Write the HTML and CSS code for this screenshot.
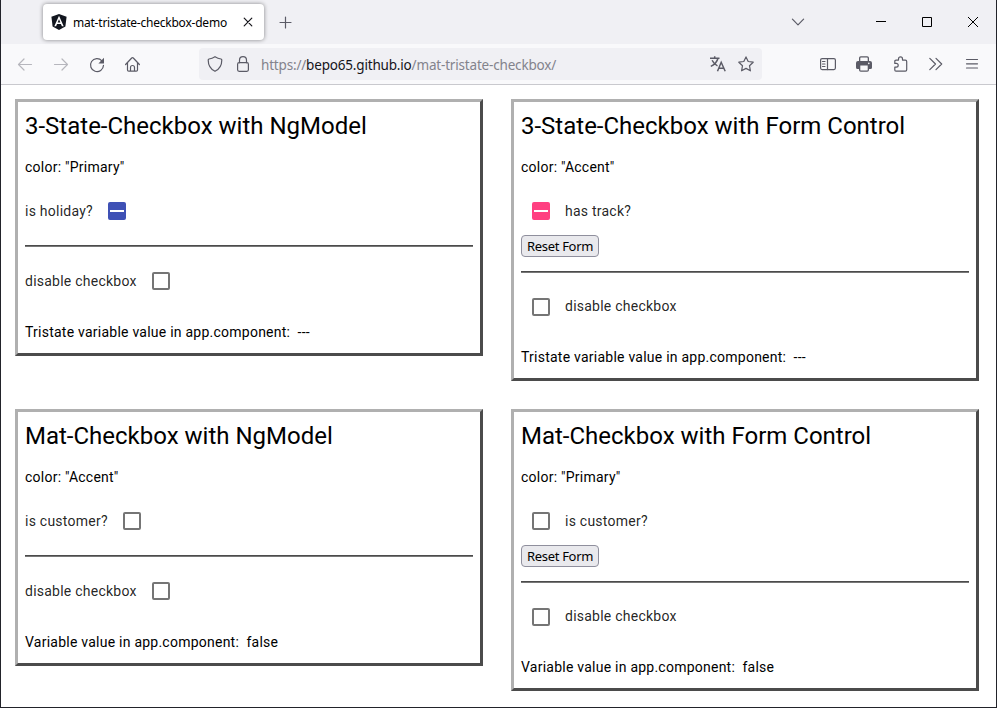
FILE: index.html
```html
<!DOCTYPE html>
<html lang="en">
<head>
<meta charset="utf-8">
<title>mat-tristate-checkbox-demo</title>
<link rel="stylesheet" href="styles.css">
</head>
<body>
<div class="window">
  <header class="tabs">
    <div class="tab">
      <svg class="icon" viewBox="0 0 16 16"><path fill="#12161f" d="M8 0l7.600 2.700-1.200 9.800L8 16l-6.400-3.500L.4 2.700z"/><path fill="#fff" fill-rule="evenodd" d="M8 1.800L3.300 12.300h1.800l.95-2.400h3.900l.95 2.400h1.800zM8 5.200l1.350 3.200h-2.700z"/></svg>
      <span class="tab-title">mat-tristate-checkbox-demo</span>
      <svg class="icon tab-close" viewBox="0 0 16 16"><path class="line" d="M4.200 4.200l7.600 7.600M11.800 4.200l-7.600 7.600"/></svg>
    </div>
    <svg class="icon new-tab" viewBox="0 0 16 16"><path class="line" d="M7.500 2v11M2 7.500h11"/></svg>
    <div class="controls">
      <svg class="icon list-tabs" viewBox="0 0 16 16"><path class="line" d="M2.400 5.200L8 10.800l5.600-5.600"/></svg>
      <svg class="icon win" viewBox="0 0 16 16"><path d="M3 7.500h10"/></svg>
      <svg class="icon win" viewBox="0 0 16 16"><path d="M3.500 3.500h9v9h-9z"/></svg>
      <svg class="icon win" viewBox="0 0 16 16"><path d="M3 3l10 10M13 3L3 13"/></svg>
    </div>
  </header>
  <nav class="toolbar">
    <svg class="icon off" viewBox="0 0 16 16"><path class="line" d="M14.500 8.500h-13M7 3L1.500 8.500 7 14"/></svg>
    <svg class="icon off" viewBox="0 0 16 16"><path class="line" d="M1.500 8.500h13M9 3L14.500 8.500 9 14"/></svg>
    <svg class="icon" viewBox="0 0 16 16"><path class="line" d="M12.900 4.800A6.500 6.500 0 1 0 14.500 9.300"/><path fill="#5b5b66" d="M15 1.800v5.100a.5.500 0 0 1-.5.500H9.400z"/></svg>
    <svg class="icon" viewBox="0 0 16 16"><path class="line" d="M.6 8.500L6.700 2q.8-.7 1.600 0l6.100 6.500M2.500 7v7q0 1.200 1.200 1.200h7.600q1.200 0 1.200-1.200V7M5.500 15v-3.500a2 2 0 0 1 4 0V15"/></svg>
    <div class="urlbar">
      <svg class="icon" viewBox="0 0 16 16"><path class="line" d="M8 .7c2 1.300 3.800 2 6 2.300q.8.100.8.900C14.800 9 12.500 13 8 15.300 3.500 13 1.200 9 1.200 3.900q0-.8.8-.9C4.200 2.700 6 2 8 .7z"/></svg>
      <svg class="icon" viewBox="0 0 16 16"><path class="line" d="M4.500 6.700V4.200a3.500 3.500 0 0 1 7 0v2.500"/><rect class="line" x="2.600" y="6.700" width="10.800" height="8.600" rx="1.500"/></svg>
      <span class="url">https://<b>bepo65.github.io</b>/mat-tristate-checkbox/</span>
      <svg class="icon" viewBox="0 0 16 16"><path class="bold" d="M0 2.300h9.500M4.700.3v2M7.900 2.500C7 6 4.500 8.600.8 10.400M2.100 4.300c1.200 2.600 3 4.500 5.400 5.600M7.500 15.300l3.700-9 4 9M8.800 12.200h5.100"/></svg>
      <svg class="icon" viewBox="0 0 16 16"><path class="line" d="M8 .9l2.200 4.600 5 .7-3.700 3.500.9 5.100L8 12.400l-4.400 2.400.9-5.100L.8 6.200l5-.7z"/></svg>
    </div>
    <svg class="icon" viewBox="0 0 16 16"><rect class="line" x=".6" y="2.600" width="14.800" height="11" rx="1.500"/><path class="line" d="M7.500 2.600v11M2.500 5.500h2.500M2.500 8h2.500M2.500 10.500h2.500"/></svg>
    <svg class="icon" viewBox="0 0 16 16"><path fill="#5b5b66" fill-rule="evenodd" d="M3 5V2a1.800 1.800 0 0 1 1.800-1.800h6.400A1.800 1.800 0 0 1 13 2v3h1a2 2 0 0 1 2 2v4.500a1.500 1.500 0 0 1-1.500 1.500H13v1a1.800 1.800 0 0 1-1.800 1.800H4.800A1.800 1.800 0 0 1 3 14v-1H1.500A1.500 1.500 0 0 1 0 11.500V7a2 2 0 0 1 2-2zM4.300 5h7.400V2q0-.6-.6-.6H4.900q-.6 0-.6.600zM4.300 9.500V14q0 .6.6.600h6.200q.6 0 .6-.6V9.500z"/><circle cx="12.800" cy="7.400" r=".8" fill="#f9f9fb"/></svg>
    <svg class="icon" viewBox="0 0 16 16"><path class="line" d="M6.500 4.100V2.900a2 2 0 0 1 4 0v1.200h2.900q1.300 0 1.300 1.300v8.400q0 1.300-1.300 1.300H4q-1.200 0-1.200-1.200v-2.700h1.500a1.900 1.900 0 0 0 0-3.800H2.800V5.300q0-1.200 1.200-1.200z"/></svg>
    <svg class="icon" viewBox="0 0 16 16"><path class="line" d="M1.800 2.300L7.500 8l-5.700 5.700M8 2.300L13.700 8 8 13.700"/></svg>
    <svg class="icon" viewBox="0 0 16 16"><path class="line" d="M2.500 3.500h11M2.500 7.800h11M2.500 12h11"/></svg>
  </nav>
  <main class="page">
    <section class="card">
      <h1>3-State-Checkbox with NgModel</h1>
      <p>color: "Primary"</p>
      <label class="field"><span>is holiday?</span><i class="box primary"></i></label>
      <hr>
      <label class="field"><span>disable checkbox</span><i class="box"></i></label>
      <p class="value">Tristate variable value in app.component:&nbsp; ---</p>
    </section>
    <section class="card form">
      <h1>3-State-Checkbox with Form Control</h1>
      <p>color: "Accent"</p>
      <label class="field"><i class="box accent"></i><span>has track?</span></label>
      <button>Reset Form</button>
      <hr>
      <label class="field lower"><i class="box"></i><span>disable checkbox</span></label>
      <p class="value">Tristate variable value in app.component:&nbsp; ---</p>
    </section>
    <section class="card">
      <h1>Mat-Checkbox with NgModel</h1>
      <p>color: "Accent"</p>
      <label class="field"><span>is customer?</span><i class="box"></i></label>
      <hr>
      <label class="field"><span>disable checkbox</span><i class="box"></i></label>
      <p class="value">Variable value in app.component:&nbsp; false</p>
    </section>
    <section class="card form">
      <h1>Mat-Checkbox with Form Control</h1>
      <p>color: "Primary"</p>
      <label class="field"><i class="box"></i><span>is customer?</span></label>
      <button>Reset Form</button>
      <hr>
      <label class="field lower"><i class="box"></i><span>disable checkbox</span></label>
      <p class="value">Variable value in app.component:&nbsp; false</p>
    </section>
  </main>
</div>
</body>
</html>
```
FILE: styles.css
```css
* { box-sizing: border-box; }
body { margin: 0; background: #fff; font-family: Roboto, sans-serif; color: #000; }
.window { height: 708px; border: solid #22232a; border-width: 0 1px 1px; overflow: hidden; }
.icon { display: block; width: 16px; height: 16px; flex: none; overflow: visible; }
.line { fill: none; stroke: #5b5b66; stroke-width: 1.2; stroke-linecap: round; stroke-linejoin: round; }
.bold { fill: none; stroke: #5b5b66; stroke-width: 1.5; }
.off { opacity: .42; }

.tabs { display: flex; height: 44px; padding: 4px 15px 4px 42px; background: #f0f0f4; }
.tab { display: flex; align-items: center; width: 221px; height: 36px; padding: 0 8px; border-radius: 4px; background: #fff; box-shadow: 0 0 4px rgba(0, 0, 0, .45); }
.tab-title { margin-left: 6px; padding-top: 1px; font: 12px "Noto Sans", sans-serif; letter-spacing: -.22px; white-space: nowrap; }
.tab-close { margin-left: auto; }
.tab-close .line { stroke: #15141a; }
.new-tab { margin: 11px 0 0 14px; }
.controls { display: flex; gap: 30px; margin: 10px 0 0 auto; }
.list-tabs { margin-right: 37px; }
.win path { fill: none; stroke: #000; stroke-width: 1; }

.toolbar { display: flex; align-items: center; gap: 20px; height: 41px; padding: 0 16px 1px; background: #f9f9fb; border-bottom: 1px solid #c9c9ce; }
.urlbar { display: flex; align-items: center; gap: 12px; flex: 1; height: 32px; margin: 0 38px; padding: 0 8px; border-radius: 4px; background: #f0f0f4; }
.url { flex: 1; margin-left: -2px; padding-top: 2px; font: 13.5px "Noto Sans", sans-serif; letter-spacing: -.18px; color: #83838c; white-space: nowrap; }
.url b { font-weight: 400; color: #15141a; }

.page { display: grid; grid-template-columns: 468px 468px; column-gap: 28px; row-gap: 28px; align-items: start; padding: 14px; }
.card { height: 257px; padding: 8px 7px; border: 3px solid; border-color: #b0b0b0 #4b4b4b #4b4b4b #b0b0b0; }
.form { height: 282px; }
h1 { margin: 0 0 15px; font-size: 24px; font-weight: 400; line-height: 32px; }
p { margin: 0 0 14px; font-size: 14px; line-height: 20px; letter-spacing: .24px; }
.field { display: flex; align-items: center; height: 40px; font-size: 14px; line-height: 20px; letter-spacing: .24px; color: rgba(0, 0, 0, .87); }
.box { display: grid; place-items: center; width: 18px; height: 18px; margin: 0 11px 0 15px; border: 2px solid #757575; border-radius: 2px; }
.form .box { margin: 0 15px 0 11px; }
.form .lower .box { margin-top: 1px; margin-bottom: -1px; }
.primary { border-color: #3f51b5; background: #3f51b5; }
.accent { border-color: #ff4081; background: #ff4081; }
.primary::after, .accent::after { content: ""; width: 14px; height: 2px; background: #fff; }
hr { height: 2px; margin: 14px 0; border: solid; border-width: 1px 0; border-color: #4b4b4b transparent #777; }
.form hr { margin-bottom: 13px; }
.value { margin: 21px 0 0; }
button { display: block; width: 78px; height: 22px; margin-top: 4px; padding: 0; border: 1px solid #8f8f9d; border-radius: 4px; background: #e9e9ed; color: #000; font: 13px/20px "Noto Sans", sans-serif; letter-spacing: -.3px; white-space: nowrap; }
```
